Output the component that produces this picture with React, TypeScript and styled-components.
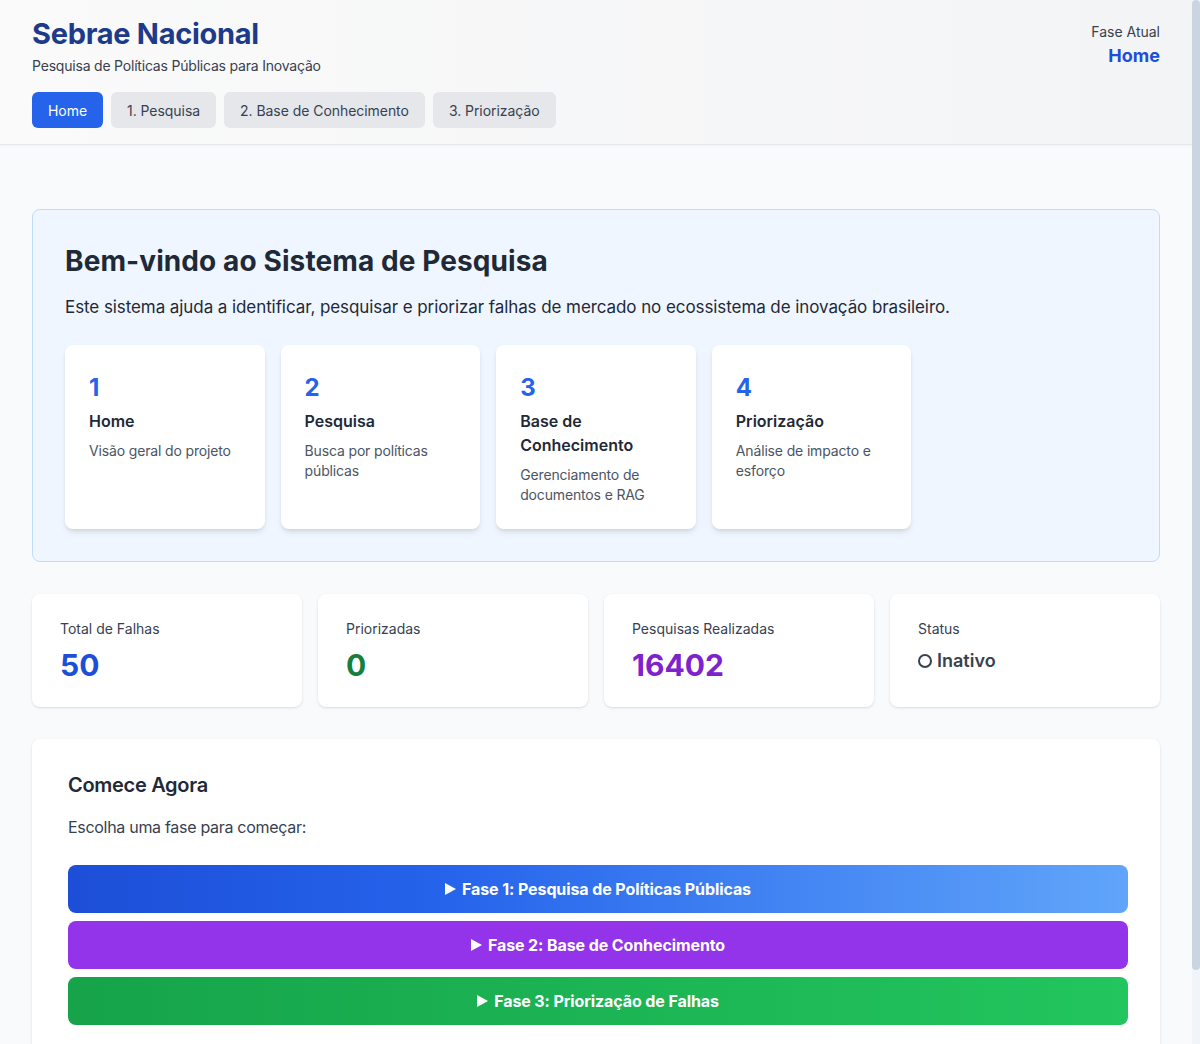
import React from "react";
import styled, { createGlobalStyle } from "styled-components";

const GlobalStyle = createGlobalStyle`
  html, body { margin: 0; padding: 0; }
  body {
    margin-right: 8px;
    font-family: Inter, "Noto Sans", "Liberation Sans", sans-serif;
    background: #f9fafb;
    color: #1f2937;
  }
  * { box-sizing: border-box; }
`;

const ScrollTrack = styled.div`
  position: fixed;
  top: 0;
  right: 0;
  bottom: 0;
  width: 8px;
  background: #f1f5f9;
`;

const ScrollThumb = styled.div`
  height: 970px;
  width: 8px;
  border-radius: 4px;
  background: #cbd5e1;
`;

const Header = styled.header`
  background: linear-gradient(to right, #fafafa, #f3f4f6);
  border-bottom: 1px solid #e5e7eb;
  box-shadow: 0 1px 2px rgba(0, 0, 0, 0.04);
  padding: 16px 32px;
`;

const TopRow = styled.div`
  display: flex;
  justify-content: space-between;
  align-items: center;
`;

const Brand = styled.div`
  display: flex;
  flex-direction: column;
  gap: 4px;
`;

const Title = styled.h1`
  margin: 0;
  font-size: 29px;
  line-height: 36px;
  font-weight: 700;
  color: #1e3a8a;
  letter-spacing: -0.3px;
`;

const Subtitle = styled.p`
  margin: 0;
  font-size: 14px;
  line-height: 20px;
  color: #374151;
  letter-spacing: -0.2px;
`;

const Phase = styled.div`
  display: flex;
  flex-direction: column;
  align-items: flex-end;
`;

const PhaseLabel = styled.span`
  font-size: 14px;
  line-height: 20px;
  color: #374151;
`;

const PhaseValue = styled.span`
  font-size: 18px;
  line-height: 28px;
  font-weight: 700;
  color: #1d4ed8;
`;

const Nav = styled.nav`
  display: flex;
  gap: 8px;
  margin-top: 16px;
`;

const NavButton = styled.button<{ $active?: boolean }>`
  height: 36px;
  padding: 0 16px;
  border: none;
  border-radius: 6px;
  font-family: inherit;
  font-size: 14px;
  letter-spacing: -0.05px;
  background: ${(p) => (p.$active ? "#2563eb" : "#e5e7eb")};
  color: ${(p) => (p.$active ? "#ffffff" : "#374151")};
  cursor: pointer;
`;

const Main = styled.main`
  padding: 64px 32px 66px;
  display: flex;
  flex-direction: column;
  gap: 32px;
`;

const Welcome = styled.section`
  background: #eff6ff;
  border: 1px solid #bfdbfe;
  border-radius: 8px;
  padding: 33px 32px 32px;
`;

const WelcomeTitle = styled.h2`
  margin: 0 0 14px;
  font-size: 28px;
  line-height: 36px;
  font-weight: 700;
  color: #1f2937;
  letter-spacing: 0.1px;
`;

const WelcomeText = styled.p`
  margin: 0 0 24px;
  font-size: 17px;
  line-height: 28px;
  letter-spacing: -0.08px;
  color: #1f2937;
`;

const StepGrid = styled.div`
  display: grid;
  grid-template-columns: repeat(5, 1fr);
  gap: 16px;
`;

const StepCard = styled.div`
  background: #ffffff;
  border-radius: 8px;
  padding: 24px;
  box-shadow: 0 4px 6px -1px rgba(0, 0, 0, 0.1), 0 2px 4px -2px rgba(0, 0, 0, 0.1);
`;

const StepNumber = styled.div`
  font-size: 24px;
  line-height: 32px;
  font-weight: 700;
  color: #2563eb;
  padding-top: 3px;
  margin-bottom: 5px;
`;

const StepTitle = styled.h3`
  margin: 0 0 8px;
  font-size: 16px;
  line-height: 24px;
  font-weight: 600;
  color: #1f2937;
`;

const StepDesc = styled.p`
  margin: 0;
  font-size: 14px;
  line-height: 20px;
  letter-spacing: -0.15px;
  color: #4b5563;
`;

const StatGrid = styled.div`
  display: grid;
  grid-template-columns: repeat(4, 1fr);
  gap: 16px;
`;

const StatCard = styled.div`
  background: #ffffff;
  border-radius: 8px;
  padding: 25px 28px 24px;
  box-shadow: 0 1px 3px rgba(0, 0, 0, 0.1), 0 1px 2px -1px rgba(0, 0, 0, 0.1);
`;

const StatLabel = styled.div`
  font-size: 14px;
  line-height: 20px;
  color: #374151;
  margin-bottom: 8px;
`;

const StatValue = styled.div<{ $color: string }>`
  font-size: 30px;
  line-height: 36px;
  font-weight: 700;
  color: ${(p) => p.$color};
`;

const StatusValue = styled.div`
  display: flex;
  align-items: center;
  gap: 5px;
  font-size: 18px;
  line-height: 28px;
  font-weight: 600;
  color: #374151;
  margin-top: 1px;
`;

const Ring = styled.span`
  width: 14px;
  height: 14px;
  border: 2px solid #374151;
  border-radius: 50%;
  display: inline-block;
`;

const Panel = styled.section`
  background: #ffffff;
  border-radius: 8px;
  padding: 32px 32px 32px 36px;
  box-shadow: 0 1px 3px rgba(0, 0, 0, 0.1), 0 1px 2px -1px rgba(0, 0, 0, 0.1);
`;

const PanelTitle = styled.h2`
  margin: 0 0 16px;
  font-size: 20px;
  line-height: 28px;
  font-weight: 600;
  letter-spacing: -0.3px;
  color: #1f2937;
`;

const PanelText = styled.p`
  margin: 0 0 26px;
  font-size: 16px;
  line-height: 24px;
  letter-spacing: -0.3px;
  color: #374151;
`;

const ActionList = styled.div`
  display: flex;
  flex-direction: column;
  gap: 8px;
`;

const ActionButton = styled.button<{ $bg: string }>`
  height: 48px;
  border: none;
  border-radius: 8px;
  background: ${(p) => p.$bg};
  color: #ffffff;
  font-family: inherit;
  font-size: 16px;
  font-weight: 700;
  letter-spacing: -0.1px;
  display: flex;
  align-items: center;
  justify-content: center;
  gap: 6px;
  cursor: pointer;
`;

const Play = styled.svg`
  width: 11px;
  height: 12px;
  fill: #ffffff;
`;

const steps = [
  { n: "1", title: "Home", desc: "Visão geral do projeto" },
  { n: "2", title: "Pesquisa", desc: "Busca por políticas públicas" },
  { n: "3", title: "Base de Conhecimento", desc: "Gerenciamento de documentos e RAG" },
  { n: "4", title: "Priorização", desc: "Análise de impacto e esforço" },
];

const actions = [
  { label: "Fase 1: Pesquisa de Políticas Públicas", bg: "linear-gradient(to right, #1d4ed8, #2563eb 35%, #60a5fa)" },
  { label: "Fase 2: Base de Conhecimento", bg: "#9333ea" },
  { label: "Fase 3: Priorização de Falhas", bg: "linear-gradient(to right, #16a34a, #22c55e)" },
];

export default function App() {
  return (
    <>
      <GlobalStyle />
      <Header>
        <TopRow>
          <Brand>
            <Title>Sebrae Nacional</Title>
            <Subtitle>Pesquisa de Políticas Públicas para Inovação</Subtitle>
          </Brand>
          <Phase>
            <PhaseLabel>Fase Atual</PhaseLabel>
            <PhaseValue>Home</PhaseValue>
          </Phase>
        </TopRow>
        <Nav>
          <NavButton $active>Home</NavButton>
          <NavButton>1. Pesquisa</NavButton>
          <NavButton>2. Base de Conhecimento</NavButton>
          <NavButton>3. Priorização</NavButton>
        </Nav>
      </Header>
      <Main>
        <Welcome>
          <WelcomeTitle>Bem-vindo ao Sistema de Pesquisa</WelcomeTitle>
          <WelcomeText>
            Este sistema ajuda a identificar, pesquisar e priorizar falhas de mercado no ecossistema de inovação brasileiro.
          </WelcomeText>
          <StepGrid>
            {steps.map((s) => (
              <StepCard key={s.n}>
                <StepNumber>{s.n}</StepNumber>
                <StepTitle>{s.title}</StepTitle>
                <StepDesc>{s.desc}</StepDesc>
              </StepCard>
            ))}
          </StepGrid>
        </Welcome>
        <StatGrid>
          <StatCard>
            <StatLabel>Total de Falhas</StatLabel>
            <StatValue $color="#1d4ed8">50</StatValue>
          </StatCard>
          <StatCard>
            <StatLabel>Priorizadas</StatLabel>
            <StatValue $color="#15803d">0</StatValue>
          </StatCard>
          <StatCard>
            <StatLabel>Pesquisas Realizadas</StatLabel>
            <StatValue $color="#7e22ce">16402</StatValue>
          </StatCard>
          <StatCard>
            <StatLabel>Status</StatLabel>
            <StatusValue>
              <Ring />
              Inativo
            </StatusValue>
          </StatCard>
        </StatGrid>
        <Panel>
          <PanelTitle>Comece Agora</PanelTitle>
          <PanelText>Escolha uma fase para começar:</PanelText>
          <ActionList>
            {actions.map((a) => (
              <ActionButton key={a.label} $bg={a.bg}>
                <Play viewBox="0 0 11 12">
                  <path d="M0 0 L11 6 L0 12 Z" />
                </Play>
                {a.label}
              </ActionButton>
            ))}
          </ActionList>
        </Panel>
      </Main>
      <ScrollTrack>
        <ScrollThumb />
      </ScrollTrack>
    </>
  );
}
